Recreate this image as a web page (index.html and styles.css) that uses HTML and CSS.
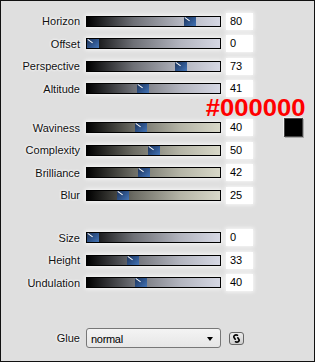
FILE: index.html
```html
<!DOCTYPE html>
<html>

<head>
    <meta charset="utf-8">
    <title>Glue settings</title>
    <link rel="stylesheet" href="styles.css">
</head>

<body>

    <div class="panel">
        <div class="group">
            <div class="row"><span class="label">Horizon</span><div class="track cool"><span class="thumb" style="--v:80"></span></div><span class="value">80</span></div>
            <div class="row"><span class="label">Offset</span><div class="track cool"><span class="thumb" style="--v:0"></span></div><span class="value">0</span></div>
            <div class="row"><span class="label">Perspective</span><div class="track cool"><span class="thumb" style="--v:73"></span></div><span class="value">73</span></div>
            <div class="row"><span class="label">Altitude</span><div class="track cool"><span class="thumb" style="--v:41"></span></div><span class="value">41</span></div>
        </div>

        <div class="group second">
            <div class="row">
                <span class="label">Waviness</span><div class="track warm"><span class="thumb" style="--v:40"></span></div><span class="value">40</span>
                <div class="swatch-cell">
                    <span class="hex">#000000</span>
                    <span class="swatch"></span>
                </div>
            </div>
            <div class="row"><span class="label">Complexity</span><div class="track warm"><span class="thumb" style="--v:50"></span></div><span class="value">50</span></div>
            <div class="row"><span class="label">Brilliance</span><div class="track warm"><span class="thumb" style="--v:42"></span></div><span class="value">42</span></div>
            <div class="row"><span class="label">Blur</span><div class="track warm"><span class="thumb" style="--v:25"></span></div><span class="value">25</span></div>
        </div>

        <div class="group third">
            <div class="row"><span class="label">Size</span><div class="track cool"><span class="thumb" style="--v:0"></span></div><span class="value">0</span></div>
            <div class="row"><span class="label">Height</span><div class="track cool"><span class="thumb" style="--v:33"></span></div><span class="value">33</span></div>
            <div class="row"><span class="label">Undulation</span><div class="track cool"><span class="thumb" style="--v:40"></span></div><span class="value">40</span></div>
        </div>

        <div class="row glue">
            <span class="label">Glue</span>
            <div class="select"><span>normal</span><span class="arrow"></span></div>
            <span class="link-btn">
                <svg width="9" height="9" viewBox="0 0 9 9">
                    <path d="M5.5 1.2 C3.2 0.2 1 2 2.2 3.8 L3.2 5.2" fill="none" stroke="#000" stroke-width="1.6" stroke-linecap="round"/>
                    <path d="M3.5 7.8 C5.8 8.8 8 7 6.8 5.2 L5.8 3.8" fill="none" stroke="#000" stroke-width="1.6" stroke-linecap="round"/>
                </svg>
            </span>
        </div>
    </div>

</body>

</html>
```

FILE: styles.css
```css
body {
    margin: 0;
    font-family: "Liberation Sans", Arial, sans-serif;
    font-size: 11px;
    color: #111;
}

.panel {
    width: 315px;
    height: 362px;
    box-sizing: border-box;
    border: 1px solid #111;
    background-color: #dfdfdf;
    padding-top: 9px;
}

.group.second {
    margin-top: 16.5px;
}

.group.third {
    margin-top: 20px;
}

.row {
    display: flex;
    align-items: center;
    height: 22.5px;
}

.label {
    width: 79px;
    margin-right: 6px;
    text-align: right;
    text-shadow: 0 0 3px #fff, 0 0 3px #fff;
}

.track {
    display: flex;
    width: 135px;
    height: 11px;
    box-sizing: border-box;
    border: 1px solid #000;
    box-shadow: 0 0 4px 1px rgba(255, 255, 255, .8);
}

.track.cool {
    background: linear-gradient(to right, #000, #6e7076 35%, #b2b4be 70%, #d6d8e4);
}

.track.warm {
    background: linear-gradient(to right, #000, #6c6c64 35%, #b4b4a6 70%, #d8d8c8);
}

.thumb {
    position: relative;
    overflow: hidden;
    width: 12px;
    height: 100%;
    margin-left: calc(var(--v) * 1.21px);
    background: linear-gradient(135deg, #1d3358, #30568e 55%, #4575b6);
}

.thumb::before {
    content: "";
    position: absolute;
    left: 1px;
    top: 0;
    width: 6px;
    height: 1px;
    background-color: #fff;
    transform-origin: 0 0;
    transform: rotate(35deg);
}

.value {
    width: 27px;
    height: 17px;
    box-sizing: border-box;
    margin-left: 5px;
    padding-left: 4px;
    line-height: 17px;
    background-color: #fff;
    color: #000;
    box-shadow: 0 0 4px 1px rgba(255, 255, 255, .8);
}

.swatch-cell {
    position: relative;
    width: 19px;
    height: 19px;
    margin-left: 31px;
}

.swatch {
    display: block;
    width: 19px;
    height: 19px;
    box-sizing: border-box;
    background-color: #000;
    border: 1px solid #444;
    box-shadow: 1px 1px 0 #aaa, -1px -1px 0 #f2f2f2;
}

.hex {
    position: absolute;
    right: -2px;
    bottom: 19px;
    font-size: 23.5px;
    font-weight: bold;
    line-height: 20px;
    color: #f00;
    white-space: nowrap;
    transform: scaleX(1.09);
    transform-origin: right bottom;
}

.glue {
    margin-top: 32.75px;
}

.select {
    display: flex;
    align-items: center;
    justify-content: space-between;
    width: 135px;
    height: 20px;
    box-sizing: border-box;
    padding: 1px 7px 0 4px;
    border: 1px solid #777;
    border-radius: 3px;
    background: linear-gradient(#f4f4f4, #e6e6e6);
    color: #000;
    letter-spacing: -0.3px;
}

.arrow {
    width: 0;
    height: 0;
    border-left: 3px solid transparent;
    border-right: 3px solid transparent;
    border-top: 4px solid #000;
}

.link-btn {
    display: flex;
    align-items: center;
    justify-content: center;
    width: 15px;
    height: 13px;
    box-sizing: border-box;
    margin-left: 8px;
    border: 1px solid #666;
    border-radius: 3px;
    background: linear-gradient(#ececec, #cfcfcf);
}
```
